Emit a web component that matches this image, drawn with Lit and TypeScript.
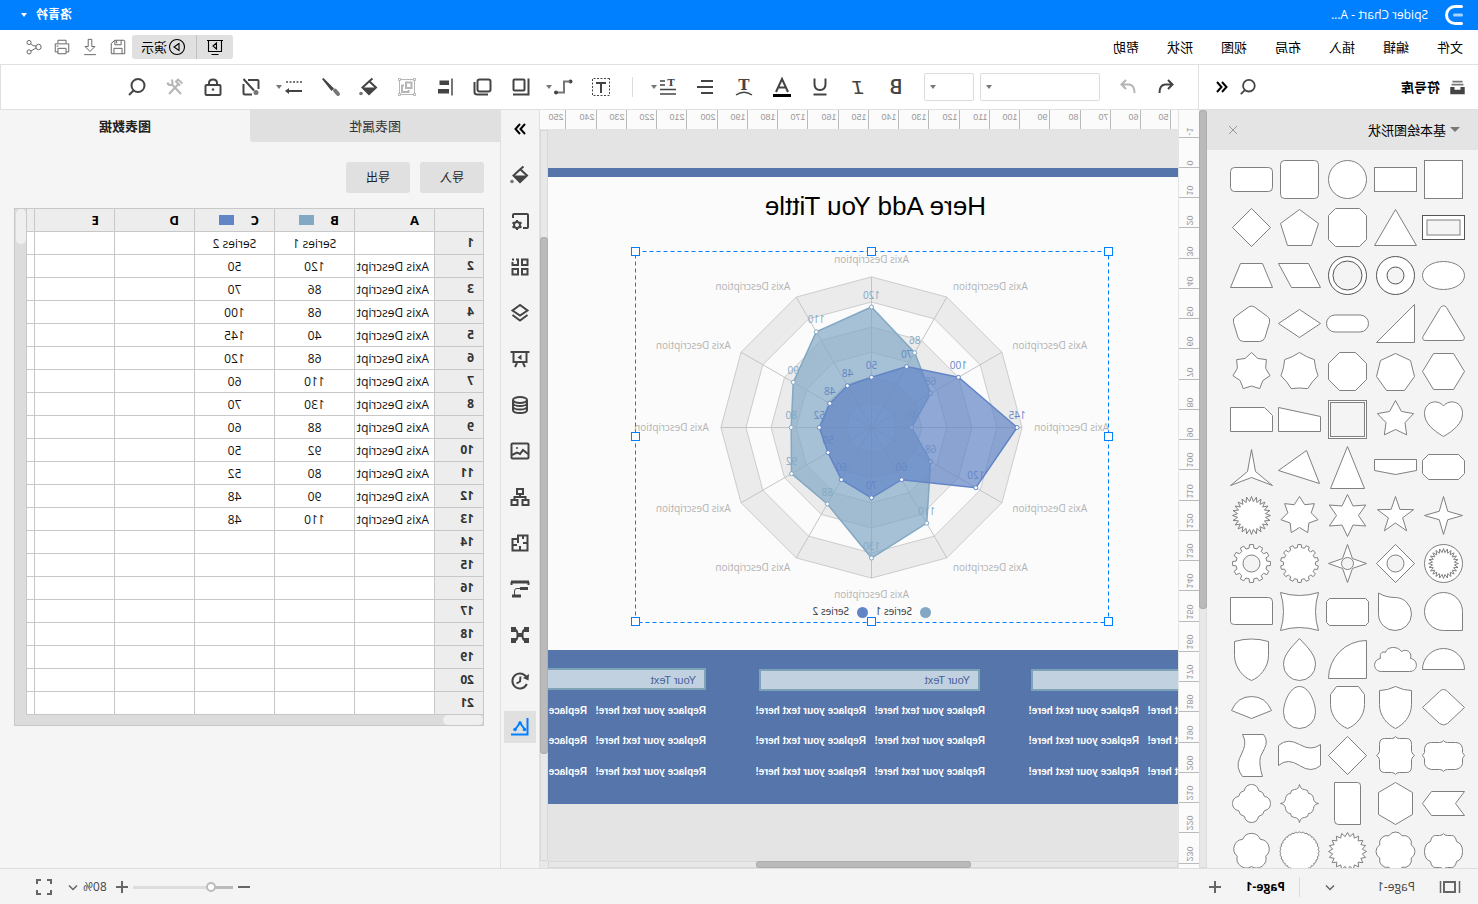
import { LitElement, html, svg, css, nothing } from "lit";
import { customElement, state } from "lit/decorators.js";
import { classMap } from "lit/directives/class-map.js";

type Pt = [number, number];

const pts = (list: Pt[]) => list.map((p) => p.map((n) => n.toFixed(2)).join(",")).join(" ");
const polar = (r: number, deg: number): Pt => {
  const a = ((deg - 90) * Math.PI) / 180;
  return [r * Math.cos(a), r * Math.sin(a)];
};
const poly = (...n: number[]) => {
  const out: Pt[] = [];
  for (let i = 0; i < n.length; i += 2) out.push([n[i], n[i + 1]]);
  return svg`<polygon points=${pts(out)}></polygon>`;
};
const star = (n: number, outer: number, inner: number) =>
  svg`<polygon points=${pts(
    Array.from({ length: n * 2 }, (_, i) => polar(i % 2 ? inner : outer, (i * 180) / n)),
  )}></polygon>`;
const flower = (n: number, rp: number, ar: number, rot = 0) => {
  let d = "";
  for (let i = 0; i <= n; i++) {
    const [x, y] = polar(rp, rot + ((i - 0.5) * 360) / n);
    d += i ? `A${ar} ${ar} 0 0 1 ${x.toFixed(2)} ${y.toFixed(2)}` : `M${x.toFixed(2)} ${y.toFixed(2)}`;
  }
  return svg`<path d=${d + "Z"}></path>`;
};
const gear = (n: number, outer: number, inner: number) => {
  const list: Pt[] = [];
  for (let i = 0; i < n; i++) {
    const a = (i * 360) / n;
    const w = 360 / n;
    list.push(polar(inner, a - w * 0.3), polar(outer, a - w * 0.2), polar(outer, a + w * 0.2), polar(inner, a + w * 0.3));
  }
  return svg`<polygon points=${pts(list)}></polygon>`;
};
const rect = (w: number, h: number, r = 0) =>
  svg`<rect x=${-w / 2} y=${-h / 2} width=${w} height=${h} rx=${r}></rect>`;
const circle = (r: number) => svg`<circle r=${r}></circle>`;
const path = (d: string) => svg`<path d=${d}></path>`;

const SHAPES = [
  ["正方形", rect(38, 38)],
  ["矩形", rect(42, 24)],
  ["圆形", circle(19)],
  ["圆角正方形", rect(38, 38, 4)],
  ["圆角矩形", rect(42, 24, 4)],
  ["边框", svg`<g class="dark">${rect(42, 24)}</g><g class="hole">${rect(33, 15)}</g>`],
  ["三角形", poly(0, -18, 21, 18, -21, 18)],
  ["切角正方形", poly(-12, -19, 12, -19, 19, -12, 19, 12, 12, 19, -12, 19, -19, 12, -19, -12)],
  ["五边形", poly(0, -18, 19, -4, 12, 18, -12, 18, -19, -4)],
  ["菱形", poly(0, -19, 19, 0, 0, 19, -19, 0)],
  ["椭圆", svg`<ellipse rx="21" ry="14"></ellipse>`],
  ["圆环", svg`<g class="dark">${circle(19)}</g><g class="hole dark">${circle(8.5)}</g>`],
  ["双圆", svg`<g class="dark">${circle(19)}</g><g class="hole dark">${circle(14.5)}</g>`],
  ["平行四边形", poly(-9, -12, 21, -12, 8, 12, -21, 12)],
  ["梯形", poly(-11, -12, 11, -12, 21, 12, -21, 12)],
  ["圆角三角形", path("M-3 -16Q0 -19.500 3 -16L20.500 13Q22 17 17.500 17H-17.500Q-22 17 -20.500 13Z")],
  ["直角三角形", poly(-19, -19, -19, 19, 19, 19)],
  ["胶囊形", rect(42, 17, 8.5)],
  ["扁菱形", poly(0, -14, 21, 0, 0, 14, -21, 0)],
  ["圆角五边形", path("M-3 -16.500Q0 -18.500 3 -16.500L16 -7Q19 -5 18 -1L13.500 14Q12 18 8 18H-8Q-12 18 -13.500 14L-18 -1Q-19 -5 -16 -7Z")],
  ["六边形", poly(-10, -18, 10, -18, 21, 0, 10, 18, -10, 18, -21, 0)],
  ["七边形", poly(0, -18, 15, -11, 19, 5, 9, 19, -9, 19, -19, 5, -15, -11)],
  ["八边形", poly(-8, -19, 8, -19, 19, -8, 19, 8, 8, 19, -8, 19, -19, 8, -19, -8)],
  ["凹七边形", star(7, 19, 16.5)],
  ["七角形", star(7, 19, 14.5)],
  ["心形", path("M0 17C-10 11 -19 4 -19 -6C-19 -18 -6 -21 0 -13.500C6 -21 19 -18 19 -6C19 4 10 11 0 17Z")],
  ["圆角星形", star(5, 19, 10)],
  ["双方形", svg`${rect(38, 38)}<g class="hole">${rect(34, 34)}</g>`],
  ["斜顶形", poly(21, -12, -21, -3, -21, 12, 21, 12)],
  ["切角矩形", poly(-13, -12, 21, -12, 21, 12, -21, 12, -21, -4)],
  ["八角矩形", poly(-15, -13, 15, -13, 21, -7, 21, 6, 15, 12, -15, 12, -21, 6, -21, -7)],
  ["旗形", poly(-21, -8, 21, -8, 21, 3, 0, 7, -21, 3)],
  ["等腰三角形", poly(0, -21, 17, 21, -17, 21)],
  ["任意三角形", poly(-7, -17, -20, 16, 21, 3)],
  ["三角星", poly(0, -18, 4, 4, 21, 18, 0, 10, -21, 18, -4, 4)],
  ["四角星", star(4, 19, 6)],
  ["五角星", star(5, 19, 7.5)],
  ["六角星", star(6, 21, 11)],
  ["七角星", star(7, 19, 12)],
  ["爆炸形", star(24, 19, 14)],
  ["圆形爆炸", svg`${circle(19)}${star(24, 15, 11)}`],
  ["菱形圆环", svg`${poly(0, -19, 19, 0, 0, 19, -19, 0)}<g class="hole">${circle(8.5)}</g>`],
  ["星形圆环", svg`${star(4, 19, 7)}<g class="hole">${circle(6)}</g>`],
  ["齿轮", gear(14, 19, 16)],
  ["齿轮圆环", svg`${gear(12, 19, 15.5)}<g class="hole">${circle(8.5)}</g>`],
  ["圆角泪滴", path("M-19 19V0A19 19 0 1 1 0 19Z")],
  ["泪滴", path("M17 -18.500Q10 -14 0 -14A16.500 16.500 0 1 0 17 3Z")],
  ["小切角矩形", path("M-18 -13H18L21 -10V11L18 14H-18L-21 11V-10Z")],
  ["凹方形", path("M-19 -19Q0 -13 19 -19Q13 0 19 19Q0 13 -19 19Q-13 0 -19 -19Z")],
  ["对角圆角", path("M-17 -14H21V10Q21 13 17 13H-21V-10Q-21 -14 -17 -14Z")],
  ["半圆", path("M-21 10A21 21 0 0 1 21 10Z")],
  ["云形", path("M14 12H-14C-23 12 -23 0 -15 -1C-17 -8 -10 -11 -6 -8C-2 -14 9 -13 10 -7C14 -9 16 -5 15 -1C23 0 23 12 14 12Z")],
  ["扇形", path("M-19 19V-19A38 38 0 0 1 19 19Z")],
  ["水滴", path("M0 -21C6 -14 16 -6 16 5A16 16 0 0 1 -16 5C-16 -6 -6 -14 0 -21Z")],
  ["盾形", path("M-17 -18Q0 -23 17 -18V-4C17 8 8 18 0 21C-8 18 -17 8 -17 -4Z")],
  ["圆角菱形", path("M-4 -16Q0 -20 4 -16L21 0L4 16Q0 19 -4 16L-21 0Z")],
  ["尖顶盾", path("M0 -21Q8 -17 16 -17V-3C16 9 8 17 0 21C-8 17 -16 9 -16 -3V-17Q-8 -17 0 -21Z")],
  ["切角盾", path("M-11 -21H11L17 -13V-3C17 9 8 18 0 21C-8 18 -17 9 -17 -3V-13Z")],
  ["蛋形", path("M0 -21C9 -21 16 -6 16 5A16 16 0 0 1 -16 5C-16 -6 -9 -21 0 -21Z")],
  ["弧扇形", path("M0 11L-20 3Q-14 -11 0 -11T20 3Z")],
  ["横牌匾", path("M0 -15Q1 -13 4 -13H12Q18 -13 19 -7V-3L21 0L19 3V8Q18 13 12 14H4Q1 14 0 16Q-1 14 -4 14H-12Q-18 13 -19 8V3L-21 0L-19 -3V-7Q-18 -13 -12 -13H-4Q-1 -13 0 -15Z")],
  ["方牌匾", path("M0 -19Q1 -17 4 -17H11Q16 -17 16 -11V-4Q17 -1 19 0Q17 1 16 4V11Q16 17 11 17H4Q1 17 0 19Q-1 17 -4 17H-11Q-16 17 -16 11V4Q-17 1 -19 0Q-17 -1 -16 -4V-11Q-16 -17 -11 -17H-4Q-1 -17 0 -19Z")],
  ["小菱形", poly(0, -19, 19, 0, 0, 19, -19, 0)],
  ["横波浪", path("M21 -10Q12 -18 0 -11T-21 -11V10Q-12 18 0 10T21 10Z")],
  ["竖波浪", path("M9 -21H-12Q-17 -15 -13 -7L-9 1Q-7 8 -11 21H9Q16 12 12 3L8 -6Q5 -14 9 -21Z")],
  ["箭尾", poly(21, 0, 12, -12, -21, -12, -12, 0, -21, 12, 12, 12)],
  ["竖六边形", poly(0, -21, 17, -11, 17, 11, 0, 21, -17, 11, -17, -11)],
  ["文档", path("M-10 -21H13V17Q13 21 9 21H-13V-18Q-13 -21 -10 -21Z")],
  ["花饰", path("M0 -19Q1 -14 5 -14Q9 -14 9 -10Q13 -10 14 -5Q14 -1 19 0Q14 1 14 5Q13 10 9 10Q9 14 5 14Q1 14 0 19Q-1 14 -5 14Q-9 14 -9 10Q-13 10 -14 5Q-14 1 -19 0Q-14 -1 -14 -5Q-13 -10 -9 -10Q-9 -14 -5 -14Q-1 -14 0 -19Z")],
  ["四叶花", path("M-7 -13C-6 -21 6 -21 7 -13Q12 -12 13 -7C21 -6 21 6 13 7Q12 12 7 13C6 21 -6 21 -7 13Q-12 12 -13 7C-21 6 -21 -6 -13 -7Q-12 -12 -7 -13Z")],
  ["四瓣牌匾", path("M0 -18Q1 -16 4 -16H8Q12 -16 13 -10Q19 -8 19 0Q19 8 13 10Q12 16 8 16H4Q1 16 0 18Q-1 16 -4 16H-8Q-12 16 -13 10Q-19 8 -19 0Q-19 -8 -13 -10Q-12 -16 -8 -16H-4Q-1 -16 0 -18Z")],
  ["八瓣花", flower(8, 17, 7.5)],
  ["二十角星", star(20, 19, 15)],
  ["印章", flower(32, 18.5, 2)],
  ["五瓣花", flower(5, 15, 9.5)],
] as const;

const I = (body: unknown, size = 20, cls = "ico") =>
  html`<svg class=${cls} width=${size} height=${size} viewBox="0 0 20 20" aria-hidden="true">${body}</svg>`;

const caret = html`<svg class="caret" width="8" height="6" viewBox="0 0 8 6" aria-hidden="true"><path d="M1 1H7L4 5Z"></path></svg>`;

const icons: Record<string, unknown> = {
  undo: svg`<path d="M8 3L3.500 7.500L8 12M4 7.500H11Q16.500 8 16.500 16"></path>`,
  redo: svg`<path d="M12 3L16.500 7.500L12 12M16 7.500H9Q3.500 8 3.500 16"></path>`,
  bold: svg`<text class="rb" x="10" y="17" font-size="20">B</text>`,
  italic: svg`<text class="mono" x="10" y="17" font-size="21">I</text>`,
  underline: svg`<path d="M4.500 1.500V7Q4.500 13 10 13T15.500 7V1.500M3.500 17.500H16.500"></path>`,
  color: svg`<path d="M4 15L10 2L16 15M6.500 10.500H13.500"></path><path class="k" d="M1 18.500H19"></path>`,
  textPath: svg`<text class="slab" x="10" y="13" font-size="15">T</text><path class="m2" d="M2 18Q10 12.500 18 18"></path>`,
  align: svg`<path d="M3 4H15M3 10H19M3 16H15"></path>`,
  spacing: svg`<text class="slab" x="7" y="9" font-size="10">T</text><path class="m2" d="M13 4H18M13 8H18M2 12.500H18M2 17H18"></path>`,
  textBox: svg`<rect class="thin" x="1.500" y="1.500" width="17" height="17" stroke-dasharray="2 1.500"></rect><path d="M5 6H15M10 6V16"></path>`,
  connector: svg`<circle class="f" cx="2.500" cy="4.500" r="2"></circle><path class="mid" d="M3 4.500H9V15.500H16"></path><circle class="f" cx="17" cy="15.500" r="2"></circle>`,
  copyFrame: svg`<rect x="6.500" y="2.500" width="11" height="11" rx="1"></rect><path d="M2.500 1.500V17.500H18"></path>`,
  layers: svg`<rect x="2.500" y="2.500" width="13" height="12" rx="2"></rect><path d="M5 17.500H15.500Q18.500 17.500 18.500 15V5"></path>`,
  alignEdge: svg`<path class="g2" d="M3 1.500V18.500"></path><path class="f" d="M6 3.500H15.500V8H6ZM6 12H17V16.500H6Z"></path>`,
  group: svg`<rect class="thin" x="2.500" y="2.500" width="15" height="15"></rect><path d="M5.500 5.500H11V11H5.500ZM13 8.500H15V15H8.500V13"></path><path class="thin" fill="#fff" d="M1.500 1.500h2v2h-2zM16.500 1.500h2v2h-2zM1.500 16.500h2v2h-2zM16.500 16.500h2v2h-2z"></path>`,
  bucket: svg`<path class="f" d="M3 10.500H16.500L10 17.500Z"></path><path d="M6.500 1.500L10 4.500L16.500 10.500L10 17L3 10.500L9.500 4.500"></path><circle class="g" cx="18" cy="16.500" r="1.800"></circle>`,
  brush: svg`<path class="f" d="M19 2L17.500 1L7 11.500L9.500 14Z"></path><path class="g3" d="M6 13.500L3 17"></path>`,
  lineStyle: svg`<path class="mid" stroke-dasharray="2 1.500" d="M1 5H18"></path><path d="M1 14H15"></path><path class="f" d="M14 11L18 14L14 17Z"></path>`,
  noFill: svg`<path d="M2.500 12V4Q2.500 3 3.500 3H13M17.500 7V16Q17.500 17.500 16 17.500H9"></path><path d="M17.500 2L7 13.500"></path><circle class="g" cx="5" cy="15.500" r="2.500"></circle>`,
  lock: svg`<rect x="2.500" y="8" width="15" height="10" rx="1"></rect><path d="M6 8V6Q6 2.500 10 2.500T14 6V8"></path><circle class="f" cx="10" cy="12.500" r="1.200"></circle>`,
  tools: svg`<path d="M4 17L13 7.500M16 17L7 7.500M2.500 6.500L7 2.500L9 4.500L5 8.500"></path><path d="M13.500 2.500Q11 7 14 8Q17 8.500 17.500 5.500"></path>`,
  search: svg`<circle cx="9" cy="8.500" r="6.500"></circle><path d="M13.500 13.500L18 18"></path>`,
  gearFrame: svg`<path d="M7 17H3Q2 17 2 16V4Q2 3 3 3H16Q17 3 17 4V7"></path><circle cx="13" cy="14" r="3"></circle><path d="M13 9V11M13 17V19M8.500 11.500L10.500 12.500M15.500 15.500L17.500 16.500M8.500 16.500L10.500 15.500M15.500 12.500L17.500 11.500"></path>`,
  components: svg`<path d="M2.500 2.500H8V8H2.500ZM2.500 12H8V17.500H2.500ZM12 12H17.500V17.500H12ZM17.500 5V8H12V2.500H14M16 2.500H18"></path>`,
  stack: svg`<path d="M10 2L17.500 7.500L10 12.500L2.500 7.500ZM2.500 12L10 17.500L17.500 12"></path>`,
  board: svg`<path d="M.5 3H19.500M3.500 3V13H16.500V3M7 14L5 18M13 14L15 18"></path><path class="f" d="M12.500 8.500L8.500 5.500V11Z"></path>`,
  database: svg`<ellipse cx="10" cy="5" rx="7" ry="3"></ellipse><path d="M3 5V15Q3 18 10 18T17 15V5M3 8.500Q4 11 10 11T17 8.500M3 12Q4 14.500 10 14.500T17 12"></path>`,
  picture: svg`<rect x="1.500" y="2.500" width="17" height="15" rx="1"></rect><path d="M2 13L7 9L10 13L13 11.500L18 14"></path><circle class="f" cx="13" cy="7" r="1"></circle>`,
  org: svg`<path d="M7 2H13V7H7ZM1.500 13H7.500V18H1.500ZM12.500 13H18.500V18H12.500ZM10 7V10M4.500 13V10H15.500V13"></path>`,
  plan: svg`<path d="M2.500 2.500H12V6H17.500V17.500H2.500ZM2.500 10H7M12 6V10M10 17V13M13 12H17M7 3V6"></path>`,
  gantt: svg`<path class="flat" d="M1 3H19M2 9.500H10M9 17H18"></path><path d="M1.500 3V6M18.500 3V6"></path><path class="thin" d="M9 9.500H13Q15.500 9.500 15.500 12V16"></path>`,
  mind: svg`<path d="M5 4.500Q7.500 5 7.500 10T5 15.500M15 4.500Q12.500 5 12.500 10T15 15.500M7 10H13"></path><path class="f" d="M1 2H6V7H1ZM14 2H19V7H14ZM1 13H6V18H1ZM14 13H19V18H14ZM7 8H13V12H7Z"></path>`,
  history: svg`<path d="M3.200 7A7.500 7.500 0 1 1 3.200 13M9.500 5.500L10 10.500L13.500 12.500"></path><path class="f" d="M1 3L1.500 9.500L7 7Z"></path>`,
  chart: svg`<path d="M2.500 1V17.500H19M5.500 12L10 6L14.500 12"></path><circle class="f" cx="5.500" cy="12.500" r="1.800"></circle><circle class="f" cx="10" cy="6" r="1.800"></circle><circle class="f" cx="15" cy="12.500" r="1.800"></circle>`,
  expand: svg`<path class="kk" d="M10 5L5.500 10L10 15M15 5L10.500 10L15 15"></path>`,
  expandBack: svg`<path class="kk" d="M10 5L14.500 10L10 15M5 5L9.500 10L5 15"></path>`,
  save: svg`<path d="M3.500 2.500H13.500L17.500 6V17.500H2.500V3.500Q2.500 2.500 3.500 2.500ZM6.500 2.500V7.500H13.500V2.500M5.500 17.500V11.500H14.500V17.500M11.500 3V6"></path>`,
  download: svg`<path d="M8 1.500H12V9.500H15.500L10 15L4.500 9.500H8ZM3.500 18.500H16.500"></path>`,
  print: svg`<path d="M5.500 6V2.500H14.500V6M5.500 15.500H2.500V6.500H17.500V15.500H14.500M5.500 11.500H14.500V17.500H5.500ZM14 9H16"></path>`,
  share: svg`<circle cx="5" cy="10" r="3"></circle><circle cx="15.500" cy="5" r="2.300"></circle><circle cx="15.500" cy="15.500" r="2.300"></circle><path d="M7.500 9L11 8.500L13.500 6.500M7.500 11L13.500 14.500"></path>`,
  screen: svg`<path d="M2 3.500H18M3.500 3.500V14.500H16.500V3.500M6.500 17.500H13.500M8.500 6L12 9L8.500 12Z"></path>`,
  play: svg`<circle cx="10" cy="10" r="7.500"></circle><path d="M8 6.500L13 10L8 13.500Z"></path>`,
  library: svg`<path class="g4" d="M4 3H16M3 6.500H17"></path><path class="f" d="M1.500 9.500H6.500V12.500H13.500V9.500H18.500V18H1.500Z"></path>`,
  pages: svg`<rect x="5" y="5" width="11" height="10"></rect><path class="m2" d="M.5 4V16M19.500 4V16"></path>`,
  plus: svg`<path d="M10 4V16M4 10H16"></path>`,
  minus: svg`<path d="M4 10H16"></path>`,
  chevron: svg`<path d="M6 8.500L10 12.500L14 8.500"></path>`,
  full: svg`<path d="M7 3H3V7M13 3H17V7M7 17H3V13M13 17H17V13"></path>`,
};

const iconCss = css`
  .ico {
    display: block;
    flex: none;
    fill: none;
    stroke: #444;
    stroke-width: 2;
    overflow: visible;
  }
  .ico .f { fill: #444; stroke: none; }
  .ico .g { fill: #777; stroke: none; }
  .ico .g2 { stroke: #777; }
  .ico .g3 { stroke: #777; stroke-width: 4; stroke-linecap: round; }
  .ico .g4 { stroke: #777; }
  .ico .k { stroke: #000; stroke-width: 3; }
  .ico .kk { stroke: #000; }
  .ico .thin { stroke-width: 1; }
  .ico .m2 { stroke-width: 1.5; }
  .ico .mid { stroke: #777; stroke-width: 2; }
  .ico .flat { stroke-width: 3; }
  .ico text { fill: #444; stroke: none; text-anchor: middle; }
  .ico .rb { font-family: Roboto, sans-serif; font-weight: 500; }
  .ico .mono { font-family: "Liberation Mono", monospace; font-style: italic; }
  .ico .slab { font-family: "DejaVu Serif", serif; font-weight: 700; }
  .light .ico { stroke: #666; stroke-width: 1.1; }
  .off .ico { stroke: #b5b5b5; }
  .caret { display: block; flex: none; fill: #777; }
  button {
    font: inherit;
    color: inherit;
    border: 0;
    padding: 0;
    margin: 0;
    background: none;
    display: flex;
    align-items: center;
    justify-content: center;
  }
`;

@customElement("shape-library")
export class ShapeLibrary extends LitElement {
  static styles = [
    iconCss,
    css`
      :host {
        display: grid;
        grid-template-columns: 1fr 8px;
        width: 279px;
        flex: none;
        min-height: 0;
        background: #f4f4f4;
      }
      .col { overflow: hidden; min-height: 0; }
      .head {
        display: flex;
        align-items: center;
        height: 40px;
        padding: 0 16px 0 18px;
        background: #e4e4e4;
        font-size: 13px;
        color: #000;
      }
      .head .name { gap: 4px; }
      .close { margin-left: auto; width: 20px; height: 20px; }
      .close .ico { stroke: #999; stroke-width: 1; }
      .grid {
        display: grid;
        grid-template-columns: repeat(5, 48px);
        padding: 5px 10px 0;
      }
      .cell { width: 48px; height: 48px; }
      .shape { display: block; fill: #fff; stroke: #808080; stroke-width: 1; }
      .hole { fill: #f4f4f4; }
      .dark { stroke: #555; }
      .bar { background: #e8e8e8; box-shadow: inset 0 0 0 1px #dcdcdc; }
      .thumb { height: 499px; border-radius: 4px; background: #bababa; box-shadow: inset 0 0 0 1px #adadad; }
    `,
  ];
  render() {
    return html`
      <div class="col">
        <div class="head">
          <button class="name">
            <svg class="caret" width="10" height="6" viewBox="0 0 10 6" aria-hidden="true"><path d="M0 0H10L5 5Z"></path></svg>基本绘图形状
          </button>
          <button class="close" aria-label="关闭">${I(svg`<path d="M6 6L14 14M14 6L6 14"></path>`)}</button>
        </div>
        <div class="grid">
          ${SHAPES.map(
            ([name, body]) => html`<button class="cell" aria-label=${name}>
              <svg class="shape" width="48" height="48" viewBox="-24.5 -24.5 48 48" aria-hidden="true">${body}</svg>
            </button>`,
          )}
        </div>
      </div>
      <div class="bar"><div class="thumb"></div></div>
    `;
  }
}

const SERIES_1 = [120, 86, 68, 40, 68, 110, 130, 88, 92, 80, 90, 110];
const SERIES_2 = [50, 70, 100, 145, 120, 60, 70, 60, 50, 52, 48, 48];

@customElement("drawing-canvas")
export class DrawingCanvas extends LitElement {
  static styles = css`
    :host {
      display: grid;
      flex: 1;
      min-width: 0;
      min-height: 0;
      grid-template: 20px 1fr 7px / 21px 1fr 8px;
      background: #e4e4e4;
      overflow: hidden;
    }
    svg { display: block; }
    .corner { background: #fbfbfb; border-right: 1px solid #e4e4e4; }
    .top, .side { background: #fbfbfb; min-width: 0; min-height: 0; }
    .top { grid-column: 2 / 4; border-bottom: 1px solid #e4e4e4; overflow: hidden; }
    .side { grid-row: 2 / 4; border-right: 1px solid #e4e4e4; }
    .side svg { overflow: visible; }
    .tick { stroke: #bbb; }
    .num { font: 9px "Liberation Sans", sans-serif; fill: #999; }
    .view { overflow: hidden; min-width: 0; min-height: 0; }
    .vbar, .hbar { background: #e8e8e8; box-shadow: inset 0 0 0 1px #d8d8d8; }
    .vbar { padding-top: 107px; }
    .hbar { display: flex; padding-left: 207px; min-width: 0; }
    .end { background: #e8e8e8; }
    .vthumb, .hthumb { border-radius: 4px; background: #bababa; box-shadow: inset 0 0 0 1px #adadad; }
    .vthumb { height: 517px; }
    .hthumb { width: 215px; }
    .title { font: 26px "Liberation Sans", sans-serif; fill: #000; }
    .box { fill: #c2d1df; stroke: #7da3b8; stroke-width: 2; }
    .cap { font: 11px "Liberation Sans", sans-serif; fill: #46619b; }
    .rep { font: bold 10px "Liberation Sans", sans-serif; fill: #fff; }
    .axis, .val, .leg { font: 10px "Open Sans", sans-serif; }
    .axis { fill: #b2b2b2; }
    .leg { fill: #333; }
    .ring { stroke: #ccc; }
    .spoke { stroke: #c4c4c4; }
    .dot { fill: #fff; }
    .sel { fill: none; stroke: #0080ff; stroke-dasharray: 4 3; }
    .handle { fill: #fff; stroke: #0080ff; }
  `;

  private ticks(labels: string[], vertical: boolean) {
    return labels.map((label, i) => {
      const p = Math.floor(7 + i * 30.25) + 0.5;
      return vertical
        ? svg`<line class="tick" x1="0" x2="20" y1=${p} y2=${p}></line>
            <text class="num" transform=${`translate(12 ${p - 2}) rotate(-90)`}>${label}</text>`
        : svg`<line class="tick" y1="0" y2="20" x1=${p} x2=${p}></line>
            <text class="num" x=${p + 2} y="10">${label}</text>`;
    });
  }

  private radar() {
    const k = 1.004;
    const at = (v: number, i: number): Pt => {
      const a = (i * Math.PI) / 6;
      return [-v * k * Math.sin(a), -v * k * Math.cos(a)];
    };
    const idx = [...Array(12).keys()];
    const series = (data: number[], color: string) => svg`
      <polygon points=${pts(data.map(at))} fill=${color} fill-opacity="0.7" stroke=${color} stroke-width="1.5"></polygon>
      ${data.map((v, i) => {
        const [x, y] = at(v, i);
        return svg`<circle class="dot" cx=${x} cy=${y} r="2" stroke=${color}></circle>
          <text class="val" fill=${color} text-anchor="middle" x=${x} y=${y - 8.5}>${v}</text>`;
      })}`;
    return svg`<g transform="translate(306.5 297.5)">
      ${[150, 125, 100, 75, 50, 25].map(
        (r, n) => svg`<polygon class="ring" points=${pts(idx.map((i) => at(r, i)))} fill=${n % 2 ? "#fbfbfb" : "#ebebeb"}></polygon>`,
      )}
      ${idx.map((i) => {
        const [x, y] = at(150, i);
        return svg`<line class="spoke" x2=${x} y2=${y}></line>`;
      })}
      ${idx.map((i) => {
        const [x, y] = at(162, i);
        const anchor = i % 6 === 0 ? "middle" : i < 6 ? "end" : "start";
        const dy = i === 0 ? -2 : i === 6 ? 8 : 3;
        return svg`<text class="axis" text-anchor=${anchor} x=${x} y=${y + dy}>Axis Description</text>`;
      })}
      ${series(SERIES_1, "#82a8c4")}
      ${series(SERIES_2, "#6285c6")}
    </g>`;
  }

  render() {
    const groups = [-80, 193, 472];
    const handles = [69, 306, 542].flatMap((x) => [121, 306, 491].map((y) => [x, y])).filter(([x, y]) => x !== 306 || y !== 306);
    const across = Array.from({ length: 21 }, (_, i) => String(50 + i * 10));
    const down = ["-1", ...Array.from({ length: 24 }, (_, i) => String(i * 10))];
    return html`
      <div class="corner"></div>
      <div class="top"><svg width="1200" height="20">${this.ticks(across, false)}</svg></div>
      <div class="side"><svg width="20" height="738">${this.ticks(down, true)}</svg></div>
      <div class="view">
        <svg width="2000" height="731" role="img" aria-label="Spider Chart">
          <rect y="38" width="2000" height="636" fill="#fbfbfb"></rect>
          <rect y="38" width="2000" height="9" fill="#5575ab"></rect>
          <text class="title" x="192" y="85">Here Add You Tittle</text>
          ${this.radar()}
          <circle cx="252.500" cy="482.500" r="5.500" fill="#82a8c4"></circle>
          <text class="leg" x="266" y="485">Series 1</text>
          <circle cx="315.500" cy="482.500" r="5.500" fill="#6285c6"></circle>
          <text class="leg" x="329" y="485">Series 2</text>
          <rect class="sel" x="69.500" y="121.500" width="473" height="371"></rect>
          ${handles.map(([x, y]) => svg`<rect class="handle" x=${x - 3.5} y=${y - 3.5} width="8" height="8"></rect>`)}
          <rect y="520" width="2000" height="154" fill="#5575ab"></rect>
          <rect class="box" x="-74" y="540" width="220" height="20"></rect>
          <rect class="box" x="199" y="540" width="219" height="20"></rect>
          <rect class="box" x="473" y="539" width="220" height="20"></rect>
          <text class="cap" x="208" y="554">Your Text</text>
          <text class="cap" x="482" y="554">Your Text</text>
          ${groups.map((x) =>
            [584, 614, 645].map((y) =>
              [0, 119].map((dx) => svg`<text class="rep" x=${x + dx} y=${y}>Replace your text here!</text>`),
            ),
          )}
        </svg>
      </div>
      <div class="vbar"><div class="vthumb"></div></div>
      <div class="hbar"><div class="hthumb"></div></div>
      <div class="end"></div>
    `;
  }
}

@customElement("data-panel")
export class DataPanel extends LitElement {
  @state() private tab = 1;
  static styles = [
    iconCss,
    css`
      :host { display: block; width: 500px; flex: none; background: #f5f5f5; overflow: hidden; }
      .tabs { display: grid; grid-template-columns: 1fr 1fr; height: 32px; }
      .tab { font-size: 13px; color: #333; background: #e0e0e0; border-radius: 0 0 3px 0; }
      .tab.on { background: none; font-weight: 700; color: #222; }
      .acts { display: flex; gap: 10px; padding: 20px 16px 15px; }
      .act { width: 64px; height: 31px; border-radius: 3px; background: #e0e0e0; font-size: 12px; color: #222; }
      .sheet {
        display: grid;
        grid-template-columns: 1fr 12px;
        margin: 0 14px 0 16px;
        border: 1px solid #c8c8c8;
      }
      .clip { overflow: hidden; }
      table {
        table-layout: fixed;
        width: 100%;
        border-collapse: separate;
        border-spacing: 0;
        font-size: 12px;
        color: #111;
        background: #fff;
      }
      th, td {
        height: 22px;
        padding: 0;
        line-height: 22px;
        border-right: 1px solid #c8c8c8;
        border-bottom: 1px solid #c8c8c8;
        text-align: center;
        white-space: nowrap;
        overflow: hidden;
      }
      td { height: 21px; line-height: 21px; padding-top: 1px; }
      th { background: #ededed; }
      th:last-child, td:last-child { border-right: 0; }
      .rowhead { width: 48px; }
      .c { width: 79px; }
      .colhead { display: flex; align-items: center; padding-left: 15px; font-size: 13px; }
      .letter { width: 25px; text-align: left; color: #000; }
      .chip { width: 15px; height: 10px; }
      .n { text-align: left; padding-left: 9px; color: #333; font-weight: 700; }
      .txt { text-align: left; padding-left: 5px; }
      .txt div { overflow: hidden; width: 73px; }
      .v { background: #dcdcdc; border-left: 1px solid #c8c8c8; }
      .v div { width: 10px; height: 35px; border-radius: 5px; background: #efefef; }
      .h { grid-column: 1 / 3; height: 10px; background: #dcdcdc; }
      .h div { width: 40px; height: 10px; border-radius: 5px; background: #efefef; }
    `,
  ];
  render() {
    const rows = Array.from({ length: 21 }, (_, i) => i);
    const cell = (r: number, s: string, data: number[]) => (r === 0 ? s : r <= 12 ? data[r - 1] : nothing);
    return html`
      <div class="tabs" role="tablist">
        ${["图表属性", "图表数据"].map(
          (t, i) => html`<button role="tab" class=${classMap({ tab: true, on: this.tab === i })} @click=${() => (this.tab = i)}>${t}</button>`,
        )}
      </div>
      <div class="acts"><button class="act">导入</button><button class="act">导出</button></div>
      <div class="sheet">
        <div class="clip">
          <table>
            <thead>
              <tr>
                <th class="rowhead"></th>
                ${["A", "B", "C", "D", "E"].map(
                  (l) => html`<th class="c"><div class="colhead"><span class="letter">${l}</span>${l === "B" || l === "C"
                    ? html`<svg class="chip" viewBox="0 0 15 10" aria-hidden="true"><rect width="15" height="10" fill=${l === "B" ? "#82a8c4" : "#6285c6"}></rect></svg>`
                    : nothing}</div></th>`,
                )}
                <th></th>
              </tr>
            </thead>
            <tbody>
              ${rows.map(
                (r) => html`<tr>
                  <th class="n">${r + 1}</th>
                  <td class="txt">${r >= 1 && r <= 12 ? html`<div>Axis Description</div>` : nothing}</td>
                  <td>${cell(r, "Series 1", SERIES_1)}</td>
                  <td>${cell(r, "Series 2", SERIES_2)}</td>
                  <td></td>
                  <td></td>
                  <td></td>
                </tr>`,
              )}
            </tbody>
          </table>
        </div>
        <div class="v"><div></div></div>
        <div class="h"><div></div></div>
      </div>
    `;
  }
}

@customElement("app-root")
export class AppRoot extends LitElement {
  static styles = [
    iconCss,
    css`
      :host {
        display: flex;
        flex-direction: column;
        height: 100vh;
        overflow: hidden;
        background: #fff;
        color: #000;
        font-family: "Open Sans", "Noto Sans CJK SC", sans-serif;
        font-size: 13px;
        line-height: 18px;
        transform: scaleX(-1);
      }
      .title {
        display: flex;
        align-items: center;
        height: 30px;
        padding: 0 20px 0 14px;
        background: #0080ff;
        color: #fff;
        font-size: 12px;
      }
      .logo { display: block; margin-right: 16px; }
      .user { margin-left: auto; gap: 8px; font-weight: 700; }
      .user .caret { fill: #fff; }
      .menu {
        display: flex;
        align-items: center;
        height: 34px;
        border-bottom: 1px solid #e0e0e0;
        padding: 0 20px 0 15px;
      }
      .items { display: flex; gap: 28px; }
      .right { display: flex; align-items: center; margin-left: auto; }
      .show { display: flex; height: 24px; border-radius: 3px; overflow: hidden; background: #e0e0e0; }
      .show .ico { stroke: #000; stroke-width: 1.1; }
      .screen { width: 37px; border-right: 1px solid #c0c0c0; }
      .present { width: 64px; }
      .small { width: 28px; height: 28px; }
      .tools { display: flex; height: 44px; border-bottom: 1px solid #e0e0e0; border-right: 1px solid #e0e0e0; }
      .lib {
        display: flex;
        align-items: center;
        width: 280px;
        padding: 0 10px 0 12px;
        border-right: 1px solid #e0e0e0;
        box-sizing: border-box;
        font-weight: 700;
      }
      .lib .name { gap: 9px; }
      .lib .find { margin-left: auto; width: 26px; height: 26px; }
      .lib .fold { width: 26px; height: 26px; }
      .bar { display: flex; align-items: center; padding-left: 13px; min-width: 0; }
      .t { width: 38px; height: 38px; }
      .t.drop { width: 42px; justify-content: flex-start; padding-left: 9px; }
      .field { display: grid; align-items: center; margin-left: 9px; }
      .field.second { margin: 0 9px 0 6px; }
      .field select {
        grid-area: 1 / 1;
        appearance: none;
        width: 120px;
        height: 28px;
        border: 1px solid #dcdcdc;
        border-radius: 2px;
        background: #fff;
      }
      .field.second select { width: 50px; }
      .field .caret { grid-area: 1 / 1; justify-self: end; margin-right: 5px; pointer-events: none; }
      .sep { width: 1px; height: 20px; background: #dcdcdc; margin: 0 12px; }
      .main { display: flex; flex: 1; min-height: 0; }
      .side {
        display: flex;
        flex-direction: column;
        align-items: center;
        flex: none;
        width: 40px;
        box-sizing: border-box;
        border-right: 1px solid #e0e0e0;
        border-left: 1px solid #e0e0e0;
        background: #f4f4f4;
        gap: 14px;
        padding-top: 3px;
      }
      .s { width: 32px; height: 32px; flex: none; }
      .s.on { background: #e0e0e0; }
      .s.on .ico { stroke: #0080ff; }
      .s.on .ico .f { fill: #0080ff; }
      .foot {
        display: flex;
        align-items: center;
        height: 35px;
        flex: none;
        border-top: 1px solid #dedede;
        background: #f4f4f4;
        padding: 0 34px 0 18px;
        font-size: 12px;
        color: #444;
      }
      .foot .ico { stroke: #666; }
      .pager { padding-left: 25px; width: 120px; justify-content: space-between; }
      .foot .pager .ico, .foot .zoom .ico { stroke-width: 1.5; }
      .pageline { width: 1px; height: 20px; background: #dcdcdc; margin: 0 14px 0 20px; }
      .foot .cur { font-weight: 700; color: #000; margin-right: 21px; }
      .range {
        appearance: none;
        width: 100px;
        height: 10px;
        margin: 0 1px;
        background: linear-gradient(#bbb, #bbb) 0 4px / 21px 3px no-repeat, linear-gradient(#ddd, #ddd) 0 4px / 100px 3px no-repeat;
      }
      .range::-webkit-slider-thumb {
        appearance: none;
        width: 10px;
        height: 10px;
        box-sizing: border-box;
        border: 2px solid #bbb;
        border-radius: 5px;
        background: #fff;
      }
      .zoom { margin: 0 9px 0 5px; }
    `,
  ];

  private tool(name: string, label: string, mode = "") {
    return html`<button class=${classMap({ t: true, drop: mode === "drop", off: mode === "off" })} aria-label=${label}>
      ${I(icons[name])}${mode === "drop" ? caret : nothing}
    </button>`;
  }

  render() {
    const side: [string, string][] = [
      ["expandBack", "收起"], ["bucket", "填充"], ["gearFrame", "设置"], ["components", "组件"], ["stack", "图层"],
      ["board", "演示"], ["database", "数据"], ["picture", "图片"], ["org", "组织"], ["plan", "平面图"],
      ["gantt", "甘特图"], ["mind", "导图"], ["history", "历史"], ["chart", "图表"],
    ];
    return html`
      <header class="title">
        <svg class="logo" width="20" height="20" viewBox="0 0 20 20" aria-hidden="true">
          <path d="M2.500 1.500H9A8.500 8.500 0 0 1 9 18.500H2.500" fill="none" stroke="#fff" stroke-width="3" stroke-linecap="round"></path>
          <path d="M2.500 10H9.500" stroke="#a8d2ff" stroke-width="3" stroke-linecap="round"></path>
        </svg>
        <span>Spider Chart - A...</span>
        <button class="user">洛青衿${caret}</button>
      </header>
      <nav class="menu">
        <div class="items">${["文件", "编辑", "插入", "布局", "视图", "形状", "帮助"].map((m) => html`<button>${m}</button>`)}</div>
        <div class="right">
          <div class="show">
            <button class="screen" aria-label="幻灯片">${I(icons.screen)}</button>
            <button class="present">${I(icons.play)}演示</button>
          </div>
          ${[["save", "保存"], ["download", "下载"], ["print", "打印"], ["share", "分享"]].map(
            ([n, l]) => html`<button class="small light" aria-label=${l}>${I(icons[n], 18)}</button>`,
          )}
        </div>
      </nav>
      <div class="tools">
        <div class="lib">
          <button class="name">${I(icons.library, 17)}符号库</button>
          <button class="find" aria-label="搜索">${I(icons.search, 18)}</button>
          <button class="fold" aria-label="收起">${I(icons.expand)}</button>
        </div>
        <div class="bar">
          ${this.tool("undo", "撤销")}${this.tool("redo", "重做", "off")}
          <label class="field"><select aria-label="字体"><option></option></select>${caret}</label>
          <label class="field second"><select aria-label="字号"><option></option></select>${caret}</label>
          ${this.tool("bold", "粗体")}${this.tool("italic", "斜体")}${this.tool("underline", "下划线")}
          ${this.tool("color", "字体颜色")}${this.tool("textPath", "弯曲文字")}${this.tool("align", "对齐")}
          ${this.tool("spacing", "行距", "drop")}
          <span class="sep"></span>
          ${this.tool("textBox", "文本框")}${this.tool("connector", "连接线", "drop")}${this.tool("copyFrame", "置底")}
          ${this.tool("layers", "置顶")}${this.tool("alignEdge", "左对齐")}${this.tool("group", "组合", "off")}
          ${this.tool("bucket", "填充")}${this.tool("brush", "画笔")}${this.tool("lineStyle", "线型", "drop")}
          ${this.tool("noFill", "清除样式")}${this.tool("lock", "锁定")}${this.tool("tools", "工具", "off")}
          ${this.tool("search", "查找")}
        </div>
      </div>
      <main class="main">
        <shape-library></shape-library>
        <drawing-canvas></drawing-canvas>
        <div class="side">
          ${side.map(([n, l]) => html`<button class=${classMap({ s: true, on: n === "chart" })} aria-label=${l}>${I(icons[n])}</button>`)}
        </div>
        <data-panel></data-panel>
      </main>
      <footer class="foot">
        <button aria-label="页面">${I(icons.pages)}</button>
        <button class="pager">Page-1${I(icons.chevron)}</button>
        <span class="pageline"></span>
        <button class="cur">Page-1</button>
        <button aria-label="新建页面">${I(icons.plus)}</button>
        <div class="right">
          <button aria-label="缩小">${I(icons.minus)}</button>
          <input class="range" type="range" min="0" max="100" value="18" aria-label="缩放" />
          <button aria-label="放大">${I(icons.plus)}</button>
          <button class="zoom">80%${I(icons.chevron)}</button>
          <button aria-label="全屏">${I(icons.full)}</button>
        </div>
      </footer>
    `;
  }
}
